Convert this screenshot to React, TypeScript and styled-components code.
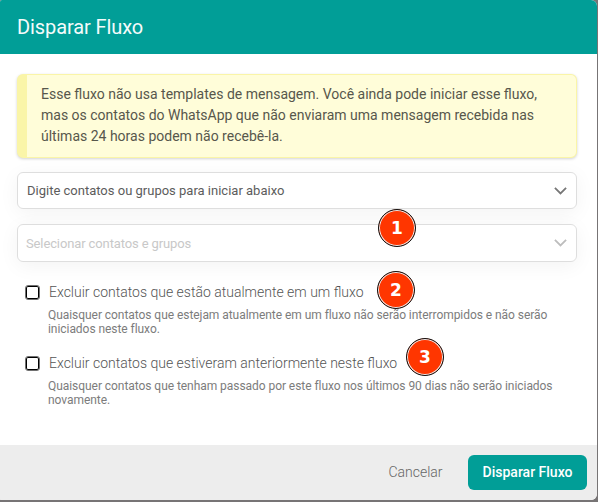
import React from 'react';
import styled, { createGlobalStyle } from 'styled-components';

const GlobalStyle = createGlobalStyle`
  * { box-sizing: border-box; }
  body { margin: 0; background: #777475; font-family: Roboto, "Liberation Sans", sans-serif; }
`;

const Backdrop = styled.div`
  width: 598px;
  height: 502px;
  padding: 0 1px 2px 0;
  overflow: hidden;
  background: #777475;
`;

const Dialog = styled.section`
  position: relative;
  display: flex;
  flex-direction: column;
  height: 500px;
  overflow: hidden;
  border-radius: 2px 6px 6px 1px;
  background: #fff;
`;

const Header = styled.header`
  display: flex;
  align-items: center;
  flex: 0 0 54px;
  padding-left: 17px;
  background: #019e97;
`;

const Title = styled.h1`
  margin: 0;
  color: #f4fbfb;
  font-size: 20px;
  font-weight: 400;
  line-height: 24px;
  letter-spacing: -0.1px;
`;

const Body = styled.main`
  flex: 1;
  padding: 20px 20px 0 17px;
`;

const Notice = styled.div`
  height: 84px;
  padding: 9px 0 0 14px;
  border: 1px solid #faf5a8;
  border-left-width: 10px;
  border-radius: 6px;
  background: #fffdd9;
  box-shadow: 0 1px 3px rgba(0, 0, 0, 0.18);
  color: #57574c;
  font-size: 14px;
  line-height: 21px;
  white-space: nowrap;
`;

const Select = styled.button<{ $muted?: boolean }>`
  display: flex;
  align-items: center;
  justify-content: space-between;
  width: 560px;
  height: ${p => (p.$muted ? 38 : 37)}px;
  margin-top: ${p => (p.$muted ? 15 : 14)}px;
  padding: 0 9px 0 ${p => (p.$muted ? 8 : 9)}px;
  border: 1px solid #dedede;
  border-radius: 6px;
  background: #fff;
  box-shadow: 0 4px 20px rgba(0, 0, 0, 0.05);
  color: ${p => (p.$muted ? '#c8c8c8' : '#5c5c5c')};
  font: 400 13px Roboto, sans-serif;
  letter-spacing: ${p => (p.$muted ? '-0.12px' : '0')};

  svg { color: ${p => (p.$muted ? '#bdbdbd' : '#777')}; }
`;

const Options = styled.div`
  display: grid;
  row-gap: 15px;
  padding: 20px 0 0 8px;
`;

const Option = styled.div`
  height: 56px;
`;

const OptionLabel = styled.label`
  display: flex;
  align-items: center;
  gap: 9px;
  height: 20px;
  color: #555;
  font-size: 14px;
  font-weight: 300;
  white-space: nowrap;
`;

const Checkbox = styled.input`
  appearance: none;
  width: 15px;
  height: 15px;
  margin: 0;
  border: 1px solid #707070;
  border-radius: 3px;
  background: #fff;
  box-shadow: inset 0 0 0 1px #000;
`;

const Hint = styled.p`
  margin: 6px 0 0 23px;
  color: #7c7c7c;
  font-size: 12px;
  line-height: 14px;
  letter-spacing: -0.053px;
  white-space: nowrap;
`;

const Footer = styled.footer`
  display: flex;
  align-items: center;
  justify-content: flex-end;
  flex: 0 0 55px;
  padding-right: 10px;
  background: #ededed;
`;

const Action = styled.button<{ $primary?: boolean }>`
  width: ${p => (p.$primary ? 119 : 105)}px;
  height: 35px;
  padding: 0 0 1px;
  border: 0;
  border-radius: 6px;
  background: ${p => (p.$primary ? '#019e97' : 'transparent')};
  color: ${p => (p.$primary ? '#fff' : '#666')};
  font: ${p => (p.$primary ? 500 : 300)} 14px Roboto, sans-serif;
`;

const Marker = styled.span<{ $x: number; $y: number }>`
  position: absolute;
  left: ${p => p.$x}px;
  top: ${p => p.$y}px;
  display: grid;
  place-items: center;
  width: 38px;
  height: 38px;
  border: 1.5px solid #111;
  border-radius: 50%;
  background: #ff3600;
  box-shadow: inset 0 0 0 1px #eee;
  color: #fff;
  font: 700 17px "DejaVu Sans", sans-serif;
`;

const Chevron = () => (
  <svg width="13" height="10" viewBox="0 0 13 10" fill="none" stroke="currentColor" strokeWidth="1.8">
    <path d="M0.9 1.8l5.6 5.6 5.6-5.6" />
  </svg>
);

export default function App() {
  return (
    <Backdrop>
      <GlobalStyle />
      <Dialog role="dialog" aria-labelledby="title">
        <Header><Title id="title">Disparar Fluxo</Title></Header>
        <Body>
          <Notice>
            Esse fluxo não usa templates de mensagem. Você ainda pode iniciar esse fluxo,<br />
            mas os contatos do WhatsApp que não enviaram uma mensagem recebida nas<br />
            últimas 24 horas podem não recebê-la.
          </Notice>
          <Select>Digite contatos ou grupos para iniciar abaixo<Chevron /></Select>
          <Select $muted>Selecionar contatos e grupos<Chevron /></Select>
          <Options>
            <Option>
              <OptionLabel><Checkbox type="checkbox" />Excluir contatos que estão atualmente em um fluxo</OptionLabel>
              <Hint>Quaisquer contatos que estejam atualmente em um fluxo não serão interrompidos e não serão<br />iniciados neste fluxo.</Hint>
            </Option>
            <Option>
              <OptionLabel><Checkbox type="checkbox" />Excluir contatos que estiveram anteriormente neste fluxo</OptionLabel>
              <Hint>Quaisquer contatos que tenham passado por este fluxo nos últimos 90 dias não serão iniciados<br />novamente.</Hint>
            </Option>
          </Options>
        </Body>
        <Footer>
          <Action>Cancelar</Action>
          <Action $primary>Disparar Fluxo</Action>
        </Footer>
        <Marker $x={378} $y={209}>1</Marker>
        <Marker $x={377} $y={271}>2</Marker>
        <Marker $x={406} $y={338}>3</Marker>
      </Dialog>
    </Backdrop>
  );
}
